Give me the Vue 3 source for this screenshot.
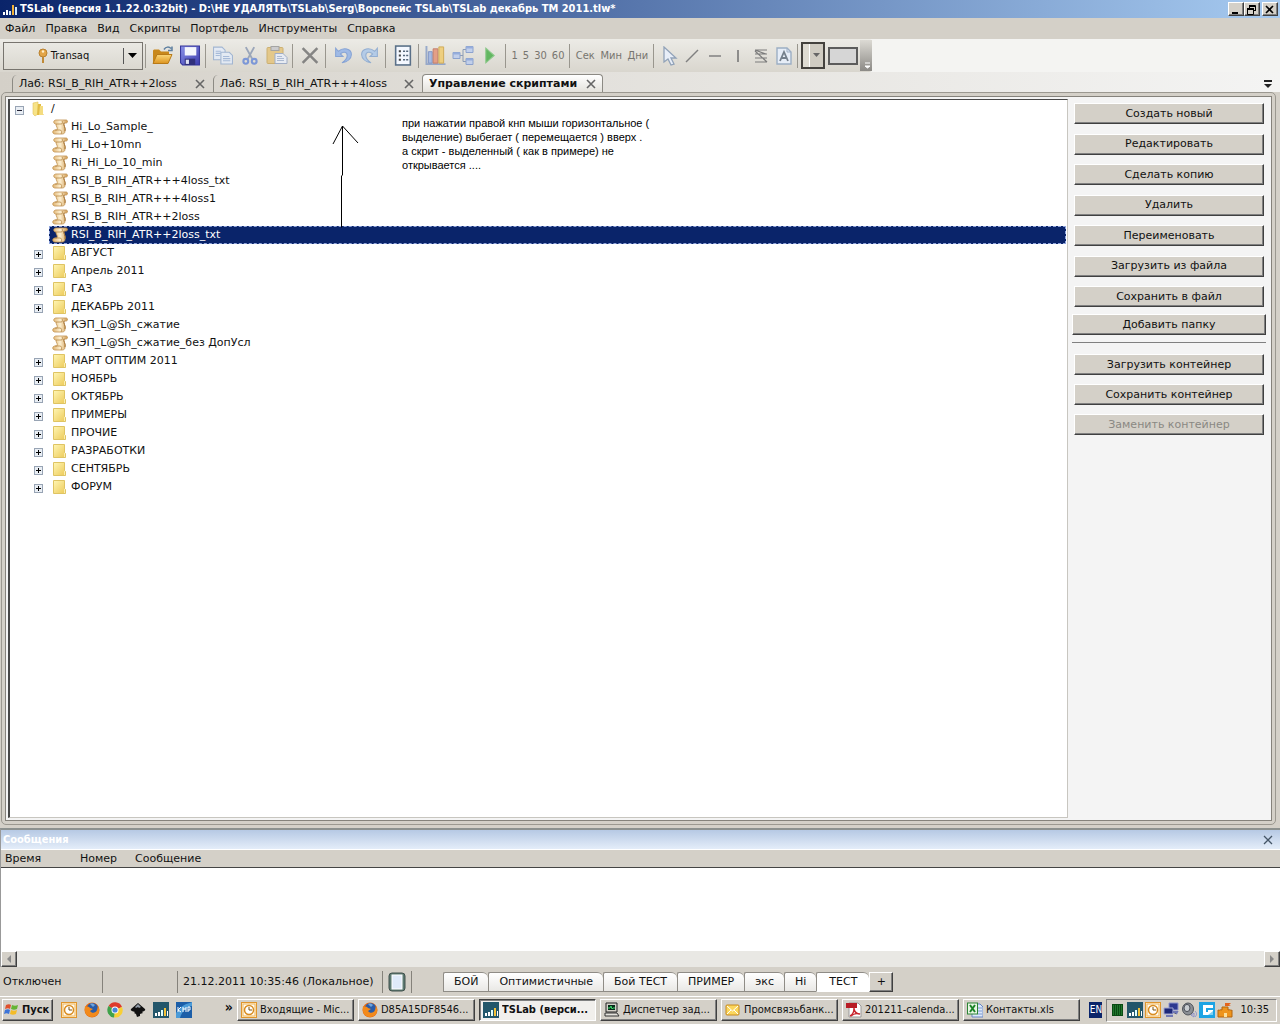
<script setup>
import { ref } from 'vue'

const menu = ['Файл', 'Правка', 'Вид', 'Скрипты', 'Портфель', 'Инструменты', 'Справка']
const tabs = [
  { name: 'Лаб: RSI_B_RIH_ATR++2loss' },
  { name: 'Лаб: RSI_B_RIH_ATR+++4loss' },
  { name: 'Управление скриптами', active: true }
]
const toolGroups = [
  ['open', 'save'],
  ['copy', 'cut', 'paste'],
  ['delete'],
  ['undo', 'redo'],
  ['props'],
  ['bars', 'nodes', 'play']
]
const enabledTools = ['open', 'save', 'props']
const drawTools = ['pointer', 'line', 'hline', 'vline', 'fibo', 'label']
const tree = [
  { name: 'Hi_Lo_Sample_', type: 'script' },
  { name: 'Hi_Lo+10mn', type: 'script' },
  { name: 'Ri_Hi_Lo_10_min', type: 'script' },
  { name: 'RSI_B_RIH_ATR+++4loss_txt', type: 'script' },
  { name: 'RSI_B_RIH_ATR+++4loss1', type: 'script' },
  { name: 'RSI_B_RIH_ATR++2loss', type: 'script' },
  { name: 'RSI_B_RIH_ATR++2loss_txt', type: 'script' },
  { name: 'АВГУСТ', type: 'folder' },
  { name: 'Апрель 2011', type: 'folder' },
  { name: 'ГАЗ', type: 'folder' },
  { name: 'ДЕКАБРЬ 2011', type: 'folder' },
  { name: 'КЭП_L@Sh_сжатие', type: 'script' },
  { name: 'КЭП_L@Sh_сжатие_без ДопУсл', type: 'script' },
  { name: 'МАРТ ОПТИМ 2011', type: 'folder' },
  { name: 'НОЯБРЬ', type: 'folder' },
  { name: 'ОКТЯБРЬ', type: 'folder' },
  { name: 'ПРИМЕРЫ', type: 'folder' },
  { name: 'ПРОЧИЕ', type: 'folder' },
  { name: 'РАЗРАБОТКИ', type: 'folder' },
  { name: 'СЕНТЯБРЬ', type: 'folder' },
  { name: 'ФОРУМ', type: 'folder' }
]
const selected = ref('RSI_B_RIH_ATR++2loss_txt')
const scriptActions = ['Создать новый', 'Редактировать', 'Сделать копию', 'Удалить', 'Переименовать', 'Загрузить из файла', 'Сохранить в файл']
const sheets = ['БОЙ', 'Оптимистичные', 'Бой ТЕСТ', 'ПРИМЕР', 'экс', 'Hi', 'ТЕСТ']
const quick = ['outlook', 'firefox', 'chrome', 'inkscape', 'chart', 'kmp']
const tasks = [
  { icon: 'outlook', name: 'Входящие - Mic...' },
  { icon: 'firefox', name: 'D85A15DF8546...' },
  { icon: 'chart', name: 'TSLab (верси...', active: true },
  { icon: 'computer', name: 'Диспетчер зад...' },
  { icon: 'mail', name: 'Промсвязьбанк...' },
  { icon: 'pdf', name: '201211-calenda...' },
  { icon: 'excel', name: 'Контакты.xls' }
]
const tray = ['grid', 'chart', 'outlook', 'network', 'speaker', 'guard', 'castle']
</script>

<template>
  <div class="desktop">
    <svg class="defs" aria-hidden="true">
      <defs>
        <linearGradient id="gFolder" x1="0" y1="0" x2="1" y2="1"><stop offset="0" stop-color="#fff6b4" /><stop offset="1" stop-color="#ecc957" /></linearGradient>
        <linearGradient id="gOpen" x1="0" y1="0" x2="0" y2="1"><stop offset="0" stop-color="#fbd778" /><stop offset="1" stop-color="#dc9420" /></linearGradient>
        <linearGradient id="gSave" x1="0" y1="0" x2="1" y2="1"><stop offset="0" stop-color="#8a92e8" /><stop offset="1" stop-color="#3c3cae" /></linearGradient>
        <linearGradient id="gScroll" x1="0" y1="0" x2="1" y2="0"><stop offset="0" stop-color="#e0b26e" /><stop offset="0.5" stop-color="#fdf0d2" /><stop offset="1" stop-color="#cf9950" /></linearGradient>
      </defs>
      <symbol id="i-chart" viewBox="0 0 16 16"><rect width="16" height="16" fill="#23566a" /><path d="M2 14V11h2v3zM5 14V10h2v4z" fill="#fff" /><path d="M8 14V8h2v6z" fill="#dff" /><path d="M11 14V6h2v8z" fill="#f4c237" /><path d="M14 14V9h1v5z" fill="#fff" /></symbol>
      <symbol id="i-logo" viewBox="0 0 16 16"><path d="M1 14V11h2v3zM4 14V9h2v5z" fill="#fff" /><path d="M7 14V10h2v4zM13 14V6h2v8z" fill="#cfe8ff" /><path d="M10 14V4h2v10z" fill="#f4b237" /></symbol>
      <symbol id="i-open" viewBox="0 0 22 20"><path d="M1 18V5l1-1h5l2 2h8v4z" fill="#c8881c" /><path d="M1 18 5 9h15l-4 9z" fill="url(#gOpen)" stroke="#b87a18" /><path d="M12 4c2-3 5-3 7-1M20 1v4h-4" fill="none" stroke="#5d7fa0" stroke-width="1.5" /></symbol>
      <symbol id="i-save" viewBox="0 0 20 20"><path d="M1 1h18v18H3l-2-2z" fill="url(#gSave)" stroke="#34349a" /><rect x="5" y="2" width="11" height="8" fill="#f4f6fc" /><rect x="5" y="13" width="10" height="6" fill="#30307c" /><rect x="6" y="14" width="3" height="4" fill="#dfe2f5" /></symbol>
      <symbol id="i-copy" viewBox="0 0 20 20"><g fill="#e4ecf8" stroke="#96aed0"><path d="M1 2h8l3 3v9H1z" /><path d="M8 7h8l3 3v8H8z" /></g><path d="M3 6h5M3 8h5M3 10h4M10 11h6M10 13h7M10 15h7" stroke="#9cb4d8" /></symbol>
      <symbol id="i-cut" viewBox="0 0 20 20"><path d="m6 2 6 11M14 2 8 13" stroke="#8e9cb4" stroke-width="1.8" /><circle cx="6" cy="15.500" r="2.300" fill="none" stroke="#6c8cd8" stroke-width="2" /><circle cx="14" cy="15.500" r="2.300" fill="none" stroke="#6c8cd8" stroke-width="2" /></symbol>
      <symbol id="i-paste" viewBox="0 0 22 20"><rect x="1" y="2" width="16" height="16" rx="1" fill="#e4c47c" stroke="#c8a860" /><rect x="5" y="1" width="8" height="4" fill="#c8c8cc" stroke="#999" /><path d="M9 8h8l4 4v6H9z" fill="#e9eef8" stroke="#96a6c4" /><path d="M11 11h5M11 13h7M11 15h7" stroke="#a4b4d0" /></symbol>
      <symbol id="i-delete" viewBox="0 0 20 20"><path d="m3 3 14 14M17 3 3 17" stroke="#757575" stroke-width="2.4" /></symbol>
      <symbol id="i-undo" viewBox="0 0 20 20"><path d="M3 3v8h7L7.500 8.500C10 6 14 6.500 14 10c0 3-2 5-5 7 5-1 9-4 9-8 0-6-8-7-12.500-3z" fill="#94b4e8" stroke="#789ad4" /></symbol>
      <symbol id="i-redo" viewBox="0 0 20 20"><path d="M17 3v8h-7l2.500-2.500C10 6 6 6.500 6 10c0 3 2 5 5 7-5-1-9-4-9-8 0-6 8-7 12.500-3z" fill="#acc8ea" stroke="#86a6d0" /></symbol>
      <symbol id="i-props" viewBox="0 0 20 20"><rect x="3" y="1" width="14" height="18" fill="#f4f8ff" stroke="#5a7088" stroke-width="1.5" /><path d="M6 5h2v2H6zM6 9h2v2H6zM6 13h2v2H6z" fill="#444" /><path d="M10 6h5M10 10h5M10 14h5" stroke="#56687c" stroke-width="1.5" stroke-dasharray="2 1" /></symbol>
      <symbol id="i-bars" viewBox="0 0 22 22"><path d="M1 1v19h20" fill="none" stroke="#8aa0c8" stroke-width="2" /><path d="M3 7h4v12H3z" fill="#9cb4e4" stroke="#7088c0" /><path d="M8 4h5v15H8z" fill="#e49478" stroke="#bc6c58" /><path d="M14 2h5v17h-5z" fill="#f0cc70" stroke="#cca040" /></symbol>
      <symbol id="i-nodes" viewBox="0 0 22 20"><path d="M7 10h4M11 4v12M11 4h4M11 16h4" fill="none" stroke="#7c90b0" /><g fill="#bccdee" stroke="#7e98cc"><path d="M1 7h7v6H1zM14 1h7v6h-7zM14 13h7v6h-7z" /></g><path d="M1 7h7v2H1zM14 1h7v2h-7zM14 13h7v2h-7z" fill="#88a4dc" /></symbol>
      <symbol id="i-play" viewBox="0 0 20 20"><path d="m6 3 8 7-8 7z" fill="#4cb04c" stroke="#7cc47c" /></symbol>
      <symbol id="i-pointer" viewBox="0 0 20 20"><path d="M5 1v15l4-3 3 6 3-1-3-6h5z" fill="#e8eef8" stroke="#91a2b8" stroke-width="1.3" /></symbol>
      <symbol id="i-line" viewBox="0 0 20 20"><path d="M4 16 16 4" stroke="#808080" stroke-width="1.5" /></symbol>
      <symbol id="i-hline" viewBox="0 0 20 20"><path d="M4 10h12" stroke="#808080" stroke-width="1.5" /></symbol>
      <symbol id="i-vline" viewBox="0 0 20 20"><path d="M10 4v12" stroke="#707070" stroke-width="1.5" /></symbol>
      <symbol id="i-fibo" viewBox="0 0 20 20"><path d="M4 4h12M4 8h12M4 12h12M4 16h12M4 5l12 11M4 4l11 4" fill="none" stroke="#7c7c7c" stroke-width="1.2" /></symbol>
      <symbol id="i-label" viewBox="0 0 20 20"><path d="M3 2h10l4 4v12H3z" fill="#e6edf7" stroke="#9caec4" stroke-width="1.4" /><path d="M13 2v4h4" fill="none" stroke="#9caec4" /><path d="m6 15 4-9 4 9M8 12h4" fill="none" stroke="#75808c" stroke-width="1.8" /></symbol>
      <symbol id="i-key" viewBox="0 0 10 16"><circle cx="5" cy="5" r="4" fill="#e3a547" stroke="#b98130" /><circle cx="5" cy="3.500" r="1.200" fill="#fff0cc" /><path d="M4 9h2v6H4z" fill="#c08a38" /></symbol>
      <symbol id="i-root" viewBox="0 0 16 16"><path d="M2 2l5-1v12l-3 2-2-2z" fill="#f7e388" stroke="#e2c25a" stroke-width="0.600" /><path d="M7 3h3v8l3 3H6z" fill="#e2bc44" /><path d="M9 5h3v9H8z" fill="#f4dc80" /></symbol>
      <symbol id="i-folder" viewBox="0 0 16 16"><path d="M1.500 1.500h11v8l1 1v4h-12z" fill="url(#gFolder)" stroke="#dfc463" /><path d="M12 10v4h1v-4z" fill="#fbeeb0" /></symbol>
      <symbol id="i-script" viewBox="0 0 16 16"><path d="M4 1h10c2 0 2 3 0 3h-2c-1 2 2 5 1 8 0 2-1 3-3 3H3c-3 0-3-4 0-4h2C6 8 4 8 4 5 1 5 1 1 4 1z" fill="url(#gScroll)" stroke="#c0904e" stroke-width="0.800" /><path d="M4 5h5c2 0 2-2 1-3M3 11h5c2 0 2 3 1 4" fill="none" stroke="#b98a48" stroke-width="0.800" /><path d="M12 4c-1 2 2 5 1 8" fill="none" stroke="#a8783c" /></symbol>
      <symbol id="i-outlook" viewBox="0 0 16 16"><rect x="0.500" y="0.500" width="15" height="15" fill="#fff3d8" stroke="#e0952c" /><rect x="2" y="2" width="12" height="12" fill="#fffaf0" stroke="#efb65c" /><circle cx="8" cy="8" r="4.500" fill="#fff" stroke="#d98c20" stroke-width="1.500" /><path d="M8 5v3h3" fill="none" stroke="#7a5210" /></symbol>
      <symbol id="i-firefox" viewBox="0 0 16 16"><circle cx="8" cy="8" r="7.500" fill="#e66a12" /><circle cx="8.500" cy="6.500" r="5.500" fill="#2a5ca8" /><path d="M1 4c2 1 4 0 5 2l3 1-3 2c2 3 6 2 7-1l1-4c3 5 0 11-6 11S0 10 1 4z" fill="#f28a1c" /><path d="M6 2c2-1 4 0 5 1L9 5z" fill="#6fa4dc" /></symbol>
      <symbol id="i-chrome" viewBox="0 0 16 16"><path d="M8 8 1.500 4A7.500 7.500 0 0 1 15 5z" fill="#de3a2c" /><path d="M8 8 15 5A7.500 7.500 0 0 1 7 15.500z" fill="#f8cf34" /><path d="M8 8 7 15.500A7.500 7.500 0 0 1 1.500 4z" fill="#3fa24a" /><circle cx="8" cy="8" r="3.500" fill="#fff" /><circle cx="8" cy="8" r="2.600" fill="#4a86d8" /></symbol>
      <symbol id="i-inkscape" viewBox="0 0 16 16"><path d="M8 1 15 7c1 2-2 2-3 3l1 1-3 1v2l-3 1-1-3-2-1 1-1C3 9 0 9 1 7z" fill="#111" /><path d="m8 2 3 3-2 1-1-1-2 1-1-1z" fill="#8e98a4" /></symbol>
      <symbol id="i-kmp" viewBox="0 0 16 16"><rect width="16" height="16" fill="#1c5ea8" /><path d="M0 11C7 1 12 2 16 0v4C11 5 6 9 4 16H0z" fill="#4b9bd8" /><path d="M2 5v5M5 5 2 8l3 2M7 5v5M7 7h3M10 5v5M12 10V5h2v3h-2" fill="none" stroke="#fff" /></symbol>
      <symbol id="i-computer" viewBox="0 0 16 16"><path d="M2 1h11v9H2z" fill="#d4d0c8" stroke="#222" /><path d="M4 3h7v5H4z" fill="#062c18" /><path d="M4 6h2l1-2 1 3 1-1h2" fill="none" stroke="#3fd86c" /><path d="M1 11h12l2 3H1z" fill="#e4e2dc" stroke="#333" /></symbol>
      <symbol id="i-mail" viewBox="0 0 16 16"><rect x="1" y="3" width="13" height="10" rx="1" fill="#fbd65c" stroke="#c88a1c" /><path d="m2 4 5.500 5L13 4M2 12l4-4M13 12 9 8" fill="none" stroke="#fff" /></symbol>
      <symbol id="i-pdf" viewBox="0 0 16 16"><path d="M3 1h9l3 3v11H3z" fill="#fff" stroke="#999" /><rect x="0" y="1" width="11" height="5" fill="#b81c24" /><path d="M8 6c0 4-2 7-4 8M8 7c1 4 3 5 6 5-3-1-7 0-9 2" fill="none" stroke="#c8242c" stroke-width="1.400" /></symbol>
      <symbol id="i-excel" viewBox="0 0 16 16"><path d="M5 2h8l3 3v10H5z" fill="#dce8fa" stroke="#6886c4" /><path d="M11 6h4M11 9h4M11 12h4" stroke="#7c9ad0" /><rect x="0.500" y="1" width="10" height="11" fill="#e8f6e4" stroke="#2c8434" /><path d="m3 3 5 7M8 3l-5 7" stroke="#1c8428" stroke-width="2" /></symbol>
      <symbol id="i-grid" viewBox="0 0 16 16"><rect x="3" y="2" width="11" height="12" fill="#0a4a12" /><path d="M4 4h9M4 6h9M4 8h9M4 10h9M4 12h9" stroke="#37a244" stroke-dasharray="1 1" /></symbol>
      <symbol id="i-network" viewBox="0 0 16 16"><path d="M6 1h9v7H6z" fill="#2c3890" stroke="#8c94cc" /><path d="M1 6h9v6H1z" fill="#1c2878" stroke="#a0a6d4" /><path d="M3 14h7M9 10h5l-1 2" stroke="#7078b4" stroke-width="2" /></symbol>
      <symbol id="i-speaker" viewBox="0 0 16 16"><ellipse cx="7" cy="7" rx="5.500" ry="6" fill="#8a8e94" stroke="#50545a" /><ellipse cx="6" cy="6" rx="3" ry="3.600" fill="#c8ccd0" stroke="#4c5058" /><path d="m10 13 3-2v4zM14 9c2 2 2 4 0 6" fill="none" stroke="#8c90c8" /></symbol>
      <symbol id="i-guard" viewBox="0 0 16 16"><rect width="16" height="16" fill="#1ea4e4" /><path d="M4 3h10v3H7v4h2V8h5v5H4z" fill="#fff" /><path d="M9 13h5V9z" fill="#7cd0f4" /></symbol>
      <symbol id="i-castle" viewBox="0 0 16 16"><path d="M1 8c2 1 2-1 4 0V5h6v3c2-1 3 1 4 0v7H1z" fill="#ee941c" stroke="#b4640c" /><path d="M8 5V1h6l-2 2 2 1H8" fill="#e4641c" /><path d="M7 15v-4h3v4z" fill="#fce09c" /></symbol>
    </svg>

    <header class="titlebar">
      <svg class="s16"><use href="#i-logo" /></svg>
      <h1>TSLab (версия 1.1.22.0:32bit) - D:\НЕ УДАЛЯТЬ\TSLab\Serg\Ворспейс TSLab\TSLab декабрь ТМ 2011.tlw*</h1>
      <button class="win raised" aria-label="Свернуть"><svg viewBox="0 0 12 11"><path d="M3 8h6v2H3z" /></svg></button>
      <button class="win raised" aria-label="Восстановить"><svg viewBox="0 0 12 11"><path d="M4.500 1v5M4 1.500h6.500V7M4 2.500h6M8 6.500h3M2.500 4v6.500h6V4M2 4.500h7M2 5.500h6" fill="none" stroke="#000" /></svg></button>
      <button class="win raised close" aria-label="Закрыть"><svg viewBox="0 0 12 11"><path d="m3 2 7 7M10 2 3 9" stroke="#000" stroke-width="1.600" /></svg></button>
    </header>

    <nav class="menubar">
      <a v-for="m in menu" :key="m" href="#">{{ m }}</a>
    </nav>

    <div class="toolrow">
      <div class="toolbar">
        <div class="account">
          <button class="account-main"><svg class="key"><use href="#i-key" /></svg>Transaq</button>
          <button class="account-drop" aria-label="Выбрать счёт"><svg viewBox="0 0 10 6"><path d="M0 0h9L4.500 5z" /></svg></button>
        </div>
        <template v-for="(g, gi) in toolGroups" :key="gi">
          <i class="sep"></i>
          <button v-for="t in g" :key="t" class="tool" :class="{ pale: !enabledTools.includes(t) }" :aria-label="t"><svg><use :href="'#i-' + t" /></svg></button>
        </template>
        <i class="sep"></i>
        <div class="words nums"><button v-for="n in ['1', '5', '30', '60']" :key="n">{{ n }}</button></div>
        <i class="sep"></i>
        <div class="words units"><button v-for="n in ['Сек', 'Мин', 'Дни']" :key="n">{{ n }}</button></div>
        <i class="sep"></i>
        <button v-for="t in drawTools" :key="t" class="tool small" :aria-label="t"><svg><use :href="'#i-' + t" /></svg></button>
        <i class="sep"></i>
        <button class="color-drop" aria-label="Цвет"><span><svg viewBox="0 0 8 5"><path d="M0 0h7L3.500 4z" fill="#666" /></svg></span></button>
        <button class="swatch" aria-label="Заливка"></button>
        <button class="overflow" aria-label="Ещё"><svg viewBox="0 0 8 8"><path d="M2 1h5M2 4h5L4.500 6z" fill="#fff" stroke="#fff" /></svg></button>
      </div>
    </div>

    <div class="tabs">
      <div v-for="t in tabs" :key="t.name" class="tab" :class="{ active: t.active }">
        <button class="tab-name">{{ t.name }}</button>
        <button class="x" aria-label="Закрыть вкладку"><svg viewBox="0 0 10 10"><path d="m1 1 8 8M9 1 1 9" stroke="#666" stroke-width="1.600" /></svg></button>
      </div>
      <button class="tablist" aria-label="Список вкладок"><svg viewBox="0 0 10 9"><path d="M1 0h8v2H1zM1 4h8L5 8z" fill="#222" /></svg></button>
    </div>

    <main class="frame">
      <div class="inner">
        <section class="tree">
          <div class="row root">
            <button class="exp" aria-label="Свернуть"><svg viewBox="0 0 9 9"><path d="M2 4.500h5" stroke="#223" /></svg></button>
            <svg class="s16"><use href="#i-root" /></svg>
            <span class="name">/</span>
          </div>
          <div v-for="n in tree" :key="n.name" class="row" :class="{ sel: n.name === selected }" @click="selected = n.name">
            <button v-if="n.type === 'folder'" class="exp" aria-label="Развернуть"><svg viewBox="0 0 9 9"><path d="M2 4.500h5M4.500 2v5" stroke="#000" /></svg></button>
            <i v-else class="exp-none"></i>
            <div class="node"><svg class="s16"><use :href="'#i-' + n.type" /></svg><span class="name">{{ n.name }}</span></div>
          </div>
          <svg class="arrow" viewBox="0 0 28 104"><path d="M10.500 103.500V52l1-1V2M2 20l9.500-18L27 19" fill="none" stroke="#000" /></svg>
          <p class="note">при нажатии правой кнп мыши горизонтальное (<br />выделение) выбегает ( перемещается ) вверх .<br />а скрит - выделенный ( как в примере) не<br />открывается ....</p>
        </section>
        <aside class="side">
          <div class="group first">
            <button v-for="a in scriptActions" :key="a" class="btn raised">{{ a }}</button>
          </div>
          <button class="btn raised wide">Добавить папку</button>
          <hr />
          <div class="group">
            <button class="btn raised">Загрузить контейнер</button>
            <button class="btn raised">Сохранить контейнер</button>
            <button class="btn raised" disabled>Заменить контейнер</button>
          </div>
        </aside>
      </div>
    </main>

    <section class="messages">
      <div class="msg-title">
        <h2>Сообщения</h2>
        <button class="x" aria-label="Закрыть панель"><svg viewBox="0 0 10 10"><path d="m1 1 8 8M9 1 1 9" stroke="#456" stroke-width="1.300" /></svg></button>
      </div>
      <div class="msg-body">
        <table>
          <thead><tr><th class="c1">Время</th><th class="c2">Номер</th><th class="c3">Сообщение</th><th></th></tr></thead>
        </table>
      </div>
      <div class="scroll">
        <button class="raised" aria-label="Влево"><svg viewBox="0 0 8 8"><path d="M6 0v8L2 4z" fill="#888" /></svg></button>
        <button class="raised" aria-label="Вправо"><svg viewBox="0 0 8 8"><path d="M2 0v8l4-4z" fill="#888" /></svg></button>
      </div>
    </section>

    <div class="status">
      <span class="cell c-state">Отключен</span>
      <span class="cell c-empty"></span>
      <span class="cell c-time">21.12.2011 10:35:46 (Локальное)</span>
      <span class="cell c-book"><button aria-label="Журнал"><svg viewBox="0 0 18 20"><rect x="1" y="1" width="16" height="18" rx="3" fill="#5d7a72" stroke="#40504c" /><rect x="4" y="3" width="10" height="14" fill="#dfeafa" stroke="#fff" /></svg></button></span>
      <div class="sheets">
        <button v-for="s in sheets" :key="s" class="sheet" :class="{ active: s === 'ТЕСТ' }">{{ s }}</button>
        <button class="plus raised">+</button>
      </div>
    </div>

    <footer class="taskbar">
      <button class="start raised">
        <svg viewBox="0 0 16 16"><path d="M2 3c2-1 4-1 5 0L6 7C5 6 3 6 1 7z" fill="#e0502c" /><path d="M8 3c2 1 4 1 6 0l-1 4c-2 1-4 1-6 0z" fill="#64b434" /><path d="M1 8c2-1 4-1 5 0l-1 4c-2-1-3-1-5 0z" fill="#3c74d8" /><path d="M7 8c2 1 4 1 6 0l-1 4c-2 1-4 1-6 0z" fill="#f4bc28" /></svg>Пуск
      </button>
      <div class="quick">
        <button v-for="q in quick" :key="q" :aria-label="q"><svg class="s16"><use :href="'#i-' + q" /></svg></button>
        <span class="more">»</span>
      </div>
      <div class="tasks">
        <button v-for="t in tasks" :key="t.name" class="task raised" :class="{ active: t.active }"><svg class="s16"><use :href="'#i-' + t.icon" /></svg><span>{{ t.name }}</span></button>
      </div>
      <span class="lang">EN</span>
      <div class="tray">
        <svg v-for="t in tray" :key="t" class="s16"><use :href="'#i-' + t" /></svg>
        <time>10:35</time>
      </div>
    </footer>
  </div>
</template>

<style>
body {
  margin: 0;
  background: #d4d0c8;
}
</style>

<style scoped>
.desktop {
  display: flex;
  flex-direction: column;
  min-height: 100vh;
  background: #d4d0c8;
  color: #111;
  font-family: "DejaVu Sans", Verdana, sans-serif;
  font-size: 11px;
  line-height: 14px;
}
.desktop * {
  box-sizing: border-box;
}
.defs {
  position: absolute;
  width: 0;
  height: 0;
}
button {
  font: inherit;
  color: inherit;
  background: none;
  border: 0;
  padding: 0;
  margin: 0;
}
svg {
  display: block;
  flex: none;
}
.s16 {
  width: 16px;
  height: 16px;
}
.raised {
  background: #d4d0c8;
  border: 1px solid;
  border-color: #fff #404040 #404040 #fff;
  box-shadow: inset -1px -1px #808080;
}

/* window caption */
.titlebar {
  display: flex;
  align-items: center;
  height: 18px;
  padding: 0 2px;
  background: linear-gradient(90deg, #0a246a, #a6caf0);
}
.titlebar h1 {
  flex: 1;
  margin: 0 0 0 2px;
  font: bold 11px/16px "DejaVu Sans Condensed", Tahoma, sans-serif;
  color: #fff;
  white-space: nowrap;
}
.win {
  width: 16px;
  height: 14px;
}
.win svg {
  width: 12px;
  height: 11px;
}
.win.close {
  margin-left: 2px;
}

/* menu */
.menubar {
  display: flex;
  gap: 10px;
  height: 21px;
  padding: 4px 5px 0;
}
.menubar a {
  color: #111;
  text-decoration: none;
}

/* toolbar */
.toolrow {
  display: flex;
  height: 33px;
  background: #f4f4f2;
}
.toolbar {
  display: flex;
  align-items: center;
  padding: 0 0 0 3px;
  background: linear-gradient(#ecebe6, #d9d6ce);
  border-radius: 0 3px 3px 0;
}
.account {
  display: flex;
  align-items: center;
  width: 140px;
  height: 28px;
  border: 1px solid #77746e;
}
.account-main {
  display: flex;
  flex: 1;
  align-items: center;
  justify-content: center;
  gap: 3px;
  font-family: "DejaVu Sans Condensed", Tahoma, sans-serif;
}
.key {
  width: 10px;
  height: 16px;
}
.account-drop {
  display: flex;
  align-items: center;
  justify-content: center;
  width: 19px;
  height: 16px;
  border-left: 1px solid #555;
}
.account-drop svg {
  width: 10px;
  height: 6px;
}
.sep {
  width: 1px;
  height: 24px;
  margin: 0 3px 0 2px;
  background: #99968e;
}
.tool {
  display: flex;
  align-items: center;
  justify-content: center;
  width: 27px;
  height: 28px;
}
.tool svg {
  width: 22px;
  height: 21px;
}
.tool.pale {
  opacity: 0.85;
}
.tool.small {
  width: 23px;
}
.tool.small svg {
  width: 20px;
  height: 20px;
}
.words {
  display: flex;
  justify-content: space-around;
  color: #77756f;
  font-family: "DejaVu Sans Condensed", Tahoma, sans-serif;
}
.nums {
  width: 58px;
}
.units {
  width: 78px;
}
.color-drop {
  display: flex;
  justify-content: flex-end;
  width: 24px;
  height: 27px;
  border: 2px solid #44423e;
  background: #dedbd2;
}
.color-drop span {
  display: flex;
  align-items: center;
  justify-content: center;
  width: 14px;
  height: 23px;
  border-left: 1px solid #fff;
  background: #d0ccc2;
}
.color-drop svg {
  width: 8px;
  height: 5px;
}
.swatch {
  width: 30px;
  height: 18px;
  margin-left: 3px;
  border: 2px solid #5c5c5c;
  background: #d6d6d6;
}
.overflow {
  display: flex;
  align-items: flex-end;
  justify-content: flex-end;
  width: 12px;
  height: 31px;
  margin-left: 2px;
  padding: 0 1px 1px 0;
  background: linear-gradient(#dcdad4, #8c8a86);
}
.overflow svg {
  width: 8px;
  height: 8px;
}

/* document tabs */
.tabs {
  display: flex;
  align-items: flex-end;
  height: 20px;
  padding: 0 7px 0 12px;
  background: linear-gradient(90deg, #d4d0c8, #f4f4f3);
}
.tab {
  display: flex;
  align-items: center;
  justify-content: space-between;
  height: 17px;
  width: 201px;
  padding: 0 8px 0 6px;
  border-left: 1px solid #8c8a84;
  border-radius: 5px 0 0 0;
  white-space: nowrap;
}
.tab:nth-child(2) {
  width: 209px;
}
.tab.active {
  width: 181px;
  height: 18px;
  padding-right: 6px;
  border: 1px solid #8c8a84;
  border-bottom: 0;
  border-radius: 4px 4px 0 0;
  background: linear-gradient(#fff, #e4e2dc);
  font-weight: bold;
}
.x svg {
  width: 10px;
  height: 10px;
}
.tablist {
  margin: 0 0 3px auto;
}
.tablist svg {
  width: 10px;
  height: 9px;
}

/* workspace */
.frame {
  display: flex;
  flex: 1;
  margin: 0 4px 0 1px;
  padding: 3px;
  border: 1px solid #9b9890;
  border-radius: 5px;
}
.inner {
  display: flex;
  flex: 1;
  padding: 2px;
  border: 1px solid #85827b;
  background: #f4f4f4;
}
.tree {
  position: relative;
  flex: 1;
  padding-bottom: 40px;
  background: #fff;
  border: 1px solid #c8c6c0;
  border-top-color: #484848;
  border-left: 2px solid #484848;
}
.row {
  display: flex;
  align-items: center;
  height: 18px;
  padding: 0 1px 0 24px;
}
.row.root {
  padding-left: 5px;
  gap: 7px;
}
.row.root .name {
  margin-left: -3px;
}
.exp,
.exp-none {
  width: 9px;
  height: 9px;
  margin-top: 2px;
}
.exp {
  outline: 1px solid #98a4b4;
  outline-offset: -1px;
  background: #e9eef4;
}
.exp svg {
  width: 9px;
  height: 9px;
}
.node {
  display: flex;
  flex: 1;
  align-items: center;
  gap: 3px;
  height: 18px;
  margin-left: 6px;
  padding-left: 2px;
  border: 1px solid transparent;
}
.name {
  line-height: 14px;
}
.sel .node {
  background: #0a246a;
  border: 1px dashed #8fa4dc;
  color: #fff;
}
.arrow {
  position: absolute;
  left: 321px;
  top: 24px;
  width: 28px;
  height: 104px;
}
.note {
  position: absolute;
  left: 392px;
  top: 16px;
  margin: 0;
  font: 11px/14px "Liberation Sans", Arial, sans-serif;
  color: #000;
  white-space: nowrap;
}
.side {
  display: flex;
  flex-direction: column;
  width: 201px;
  padding: 4px 3px 0 4px;
}
.group {
  display: flex;
  flex-direction: column;
  gap: 9px;
  padding: 0 2px;
}
.group.first {
  height: 204px;
  gap: 0;
  justify-content: space-between;
}
.btn {
  height: 21px;
  padding: 0;
}
.btn:disabled {
  color: #8a8883;
}
.wide {
  margin-top: 7px;
}
hr {
  width: 100%;
  margin: 7px 0 11px;
  border: 0;
  border-top: 1px solid #808080;
}

/* messages */
.messages {
  margin-top: 3px;
  border-top: 2px solid #8c918f;
  border-left: 1px solid #999;
}
.msg-title {
  display: flex;
  align-items: center;
  justify-content: space-between;
  height: 19px;
  padding: 0 7px 0 2px;
  background: linear-gradient(#b6c9e4, #e4edf9);
}
.msg-title h2 {
  margin: 0;
  font: bold 11px/14px "DejaVu Sans Condensed", Tahoma, sans-serif;
  color: #fff;
}
.msg-body {
  height: 102px;
  background: #fff;
}
table {
  width: 100%;
  border-collapse: collapse;
  table-layout: fixed;
}
th {
  height: 18px;
  padding: 0 4px;
  font-weight: normal;
  text-align: left;
  background: #d4d0c8;
  border-top: 1px solid #fff;
  border-bottom: 1px solid #444;
}
.c1 {
  width: 75px;
}
.c2 {
  width: 55px;
}
.c3 {
  width: 556px;
}
.scroll {
  display: flex;
  justify-content: space-between;
  height: 16px;
  background: #e9e8e4;
}
.scroll button {
  display: flex;
  align-items: center;
  justify-content: center;
  width: 16px;
  height: 16px;
}
.scroll svg {
  width: 8px;
  height: 8px;
}

/* status line */
.status {
  display: flex;
  align-items: center;
  height: 29px;
}
.cell {
  display: flex;
  align-items: center;
  height: 22px;
  border-right: 1px solid #85827b;
}
.c-state {
  width: 103px;
  padding-left: 3px;
}
.c-empty {
  width: 75px;
}
.c-time {
  width: 205px;
  padding-left: 5px;
  white-space: nowrap;
}
.c-book {
  width: 29px;
  padding-left: 5px;
}
.c-book svg {
  width: 18px;
  height: 20px;
}
.sheets {
  display: flex;
  margin-left: 31px;
}
.sheet {
  height: 20px;
  padding: 0 10px;
  border: 1px solid #8f8c86;
  border-right: 0;
  border-radius: 2px 6px 0 0;
  background: linear-gradient(#fff, #e9e8e5);
}
.sheet.active {
  padding: 0 12px;
  background: #fff;
  border-bottom-color: #fff;
}
.plus {
  width: 24px;
  height: 20px;
}

/* taskbar */
.taskbar {
  display: flex;
  align-items: center;
  height: 28px;
  padding: 0 3px 1px 2px;
  border-top: 1px solid #fff;
  font-family: "DejaVu Sans Condensed", Tahoma, sans-serif;
}
.start {
  display: flex;
  align-items: center;
  gap: 2px;
  width: 51px;
  height: 22px;
  padding-left: 1px;
  font-weight: bold;
}
.start svg {
  width: 16px;
  height: 16px;
}
.quick {
  display: flex;
  align-items: center;
  gap: 7px;
  width: 184px;
  padding-left: 8px;
}
.more {
  margin: 0 4px 6px auto;
  font-size: 14px;
  font-weight: bold;
}
.tasks {
  display: flex;
  flex: 1;
  gap: 4px;
  min-width: 0;
}
.task {
  display: flex;
  align-items: center;
  gap: 3px;
  flex: 0 1 117px;
  min-width: 0;
  height: 22px;
  padding-left: 3px;
  white-space: nowrap;
}
.task span {
  overflow: hidden;
}
.task.active {
  background: #f1efec;
  border-color: #404040 #fff #fff #404040;
  box-shadow: inset 1px 1px #808080;
  font-weight: bold;
}
.lang {
  width: 13px;
  margin-right: 4px;
  background: #0a246a;
  color: #fff;
  font-size: 10px;
  line-height: 16px;
  text-align: center;
}
.tray {
  display: flex;
  align-items: center;
  gap: 2px;
  height: 23px;
  padding: 0 7px 0 2px;
  border: 1px solid;
  border-color: #808080 #fff #fff #808080;
}
.tray time {
  margin-left: 5px;
}
</style>
